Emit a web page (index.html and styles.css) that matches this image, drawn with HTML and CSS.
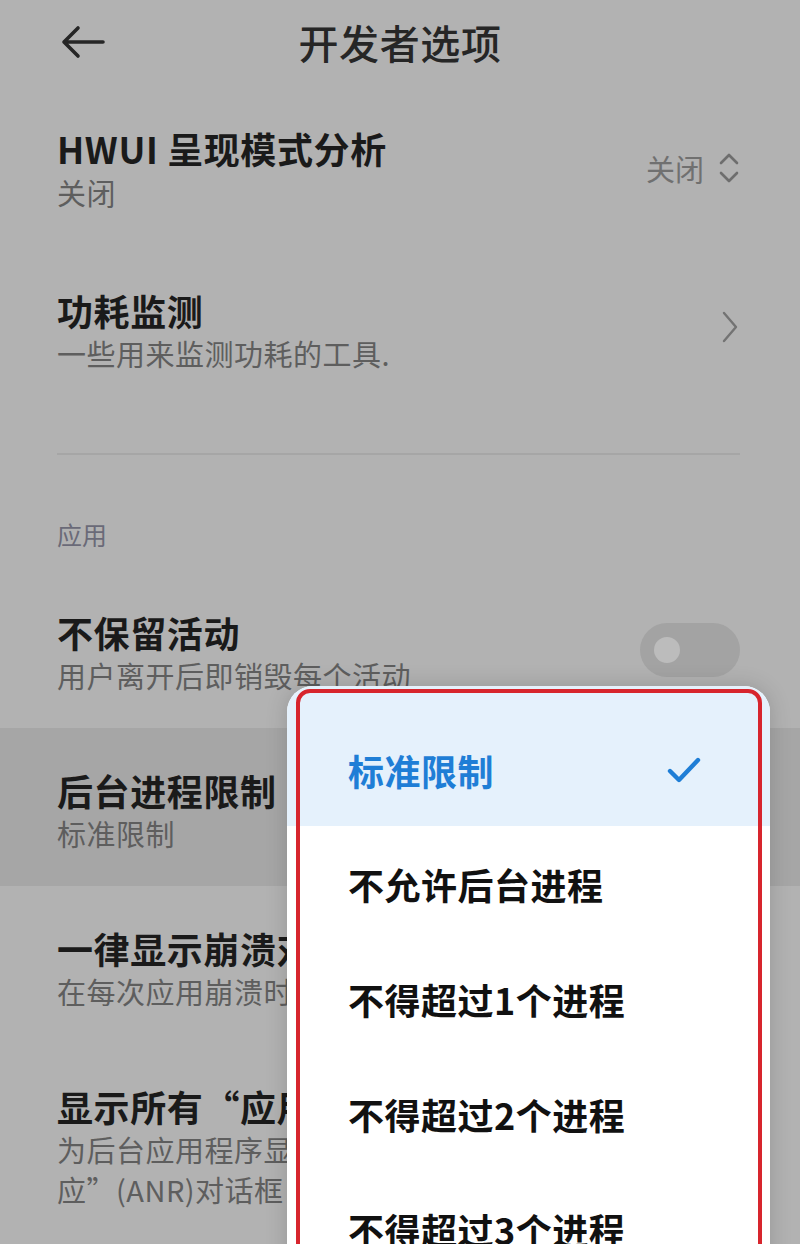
FILE: index.html
```html
<!DOCTYPE html>
<html lang="zh-CN">
<head>
<meta charset="utf-8">
<title>开发者选项</title>
<link rel="stylesheet" href="styles.css">
</head>
<body>
<div class="screen">
  <header class="topbar">
    <svg class="back" width="48" height="40" viewBox="0 0 48 40" aria-hidden="true">
      <path d="M44 20 H5 M19 6 L5 20 L19 34" fill="none" stroke="#262626" stroke-width="3.6" stroke-linecap="round" stroke-linejoin="round"/>
    </svg>
    <h1 class="page-title">开发者选项</h1>
  </header>

  <div class="row row-first">
    <div class="text">
      <div class="title">HWUI 呈现模式分析</div>
      <div class="sub">关闭</div>
    </div>
    <div class="value">
      <span>关闭</span>
      <svg width="22" height="34" viewBox="0 0 22 34" aria-hidden="true">
        <path d="M3 12 L11 4 L19 12 M3 22 L11 30 L19 22" fill="none" stroke="#6e6e6e" stroke-width="2.6" stroke-linecap="round" stroke-linejoin="round"/>
      </svg>
    </div>
  </div>

  <div class="row">
    <div class="text">
      <div class="title">功耗监测</div>
      <div class="sub">一些用来监测功耗的工具.</div>
    </div>
    <svg class="chev" width="20" height="34" viewBox="0 0 20 34" aria-hidden="true">
      <path d="M4 3 L16 17 L4 31" fill="none" stroke="#737373" stroke-width="2.4" stroke-linecap="round" stroke-linejoin="round"/>
    </svg>
  </div>

  <div class="divider"></div>

  <div class="section">应用</div>

  <div class="row">
    <div class="text">
      <div class="title">不保留活动</div>
      <div class="sub">用户离开后即销毁每个活动</div>
    </div>
    <div class="toggle"><span class="knob"></span></div>
  </div>

  <div class="row row-active">
    <div class="text">
      <div class="title">后台进程限制</div>
      <div class="sub">标准限制</div>
    </div>
  </div>

  <div class="row">
    <div class="text">
      <div class="title">一律显示崩溃对话框</div>
      <div class="sub">在每次应用崩溃时显示对话框</div>
    </div>
  </div>

  <div class="row">
    <div class="text">
      <div class="title">显示所有“应用无响应”</div>
      <div class="sub">为后台应用程序显示“应用无响<br>应”(ANR)对话框</div>
    </div>
  </div>

  <div class="popup">
    <div class="item item-selected">
      <span>标准限制</span>
      <svg class="check" width="36" height="30" viewBox="0 0 36 30" aria-hidden="true">
        <path d="M4 16 L13 25 L32 5" fill="none" stroke="#1f7ed6" stroke-width="4.4" stroke-linecap="round" stroke-linejoin="round"/>
      </svg>
    </div>
    <div class="item">不允许后台进程</div>
    <div class="item">不得超过1个进程</div>
    <div class="item">不得超过2个进程</div>
    <div class="item">不得超过3个进程</div>
    <div class="annot"></div>
  </div>
</div>
</body>
</html>
```

FILE: styles.css
```css
html, body {
  margin: 0;
  padding: 0;
}
body {
  background: #b2b2b2;
  font-family: "Noto Sans CJK SC", "Noto Sans", sans-serif;
}
.screen {
  position: relative;
  width: 800px;
  height: 1244px;
  overflow: hidden;
  background: #b2b2b2;
}
.topbar {
  height: 88px;
  display: flex;
  align-items: center;
  position: relative;
}
.back {
  margin-left: 59px;
  margin-top: -4px;
}
.page-title {
  position: absolute;
  left: 0;
  right: 0;
  top: -2px;
  margin: 0;
  text-align: center;
  line-height: 88px;
  font-size: 40px;
  font-weight: 500;
  color: #262626;
  letter-spacing: 0.6px;
}
.row {
  height: 158px;
  box-sizing: border-box;
  padding: 39px 60px 0 57px;
  display: flex;
  align-items: flex-start;
}
.row-first {
  height: 160px;
  padding-top: 37px;
}
.row-active {
  background: #a6a6a6;
}
.text {
  flex: 1;
  min-width: 0;
}
.title {
  font-size: 36px;
  line-height: 46px;
  font-weight: 600;
  color: #1a1a1a;
  white-space: nowrap;
  letter-spacing: 0.6px;
}
.row-first .sub {
  line-height: 42px;
}
.sub {
  font-size: 29px;
  line-height: 40px;
  color: #5e5e5e;
  white-space: nowrap;
  letter-spacing: 0.5px;
}
.value {
  align-self: center;
  margin-top: -37px;
  display: flex;
  align-items: center;
  gap: 14px;
  font-size: 29px;
  color: #707070;
}
.chev {
  align-self: center;
  margin-top: -39px;
}
.toggle {
  align-self: center;
  margin-top: -38px;
  width: 100px;
  height: 54px;
  border-radius: 27px;
  background: #a3a3a3;
  position: relative;
}
.knob {
  position: absolute;
  left: 14px;
  top: 14px;
  width: 26px;
  height: 26px;
  border-radius: 50%;
  background: #bcbcbc;
}
.divider {
  height: 2px;
  margin: 47px 60px 0 57px;
  background: #a6a6a6;
}
.section {
  padding: 64px 0 0 57px;
  height: 115px;
  box-sizing: border-box;
  font-size: 25px;
  line-height: 30px;
  color: #6a6a78;
}
.popup {
  position: absolute;
  left: 287px;
  top: 686px;
  width: 483px;
  height: 640px;
  background: #ffffff;
  border-radius: 26px;
  overflow: hidden;
  box-shadow: 0 0 22px rgba(0, 0, 0, 0.16);
}
.item {
  height: 115px;
  box-sizing: border-box;
  padding: 0 68px 0 61px;
  display: flex;
  align-items: center;
  font-size: 36px;
  font-weight: 600;
  color: #111111;
  letter-spacing: 0.5px;
  white-space: nowrap;
}
.item-selected {
  height: 140px;
  padding-top: 27px;
  background: #e5f1fc;
  color: #1f7ed6;
  justify-content: space-between;
}
.annot {
  position: absolute;
  left: 9px;
  top: 3px;
  right: 8px;
  height: 700px;
  border: 4px solid #d7252d;
  border-radius: 14px;
  pointer-events: none;
}
```
